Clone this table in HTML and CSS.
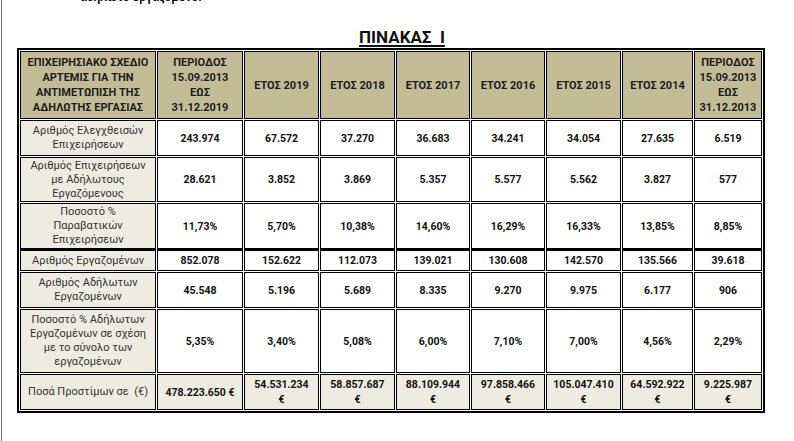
FILE: index.html
```html
<!DOCTYPE html>
<html lang="el">
<head>
<meta charset="utf-8">
<title>ΠΙΝΑΚΑΣ Ι</title>
<link rel="stylesheet" href="styles.css">
</head>
<body>
<div class="page">
  <p class="lead"><span>αδήλωτο εργαζόμενο.</span></p>
  <h1 class="title">ΠΙΝΑΚΑΣ&nbsp; Ι</h1>
  <div class="grid">
    <div class="cell head">ΕΠΙΧΕΙΡΗΣΙΑΚΟ ΣΧΕΔΙΟ<br>ΑΡΤΕΜΙΣ ΓΙΑ ΤΗΝ<br>ΑΝΤΙΜΕΤΩΠΙΣΗ ΤΗΣ<br>ΑΔΗΛΩΤΗΣ ΕΡΓΑΣΙΑΣ</div>
    <div class="cell head">ΠΕΡΙΟΔΟΣ<br>15.09.2013<br>ΕΩΣ<br>31.12.2019</div>
    <div class="cell head">ΕΤΟΣ 2019</div>
    <div class="cell head">ΕΤΟΣ 2018</div>
    <div class="cell head">ΕΤΟΣ 2017</div>
    <div class="cell head">ΕΤΟΣ 2016</div>
    <div class="cell head">ΕΤΟΣ 2015</div>
    <div class="cell head">ΕΤΟΣ 2014</div>
    <div class="cell head">ΠΕΡΙΟΔΟΣ<br>15.09.2013<br>ΕΩΣ<br>31.12.2013</div>

    <div class="cell label">Αριθμός Ελεγχθεισών<br>Επιχειρήσεων</div>
    <div class="cell val">243.974</div>
    <div class="cell val">67.572</div>
    <div class="cell val">37.270</div>
    <div class="cell val">36.683</div>
    <div class="cell val">34.241</div>
    <div class="cell val">34.054</div>
    <div class="cell val">27.635</div>
    <div class="cell val">6.519</div>

    <div class="cell label">Αριθμός Επιχειρήσεων<br>με Αδήλωτους<br>Εργαζόμενους</div>
    <div class="cell val">28.621</div>
    <div class="cell val">3.852</div>
    <div class="cell val">3.869</div>
    <div class="cell val">5.357</div>
    <div class="cell val">5.577</div>
    <div class="cell val">5.562</div>
    <div class="cell val">3.827</div>
    <div class="cell val">577</div>

    <div class="cell label">Ποσοστό %<br>Παραβατικών<br>Επιχειρήσεων</div>
    <div class="cell val">11,73%</div>
    <div class="cell val">5,70%</div>
    <div class="cell val">10,38%</div>
    <div class="cell val">14,60%</div>
    <div class="cell val">16,29%</div>
    <div class="cell val">16,33%</div>
    <div class="cell val">13,85%</div>
    <div class="cell val">8,85%</div>

    <div class="cell label thick">Αριθμός Εργαζομένων</div>
    <div class="cell val thick">852.078</div>
    <div class="cell val thick">152.622</div>
    <div class="cell val thick">112.073</div>
    <div class="cell val thick">139.021</div>
    <div class="cell val thick">130.608</div>
    <div class="cell val thick">142.570</div>
    <div class="cell val thick">135.566</div>
    <div class="cell val thick">39.618</div>

    <div class="cell label">Αριθμός Αδήλωτων<br>Εργαζομένων</div>
    <div class="cell val">45.548</div>
    <div class="cell val">5.196</div>
    <div class="cell val">5.689</div>
    <div class="cell val">8.335</div>
    <div class="cell val">9.270</div>
    <div class="cell val">9.975</div>
    <div class="cell val">6.177</div>
    <div class="cell val">906</div>

    <div class="cell label">Ποσοστό % Αδήλωτων<br>Εργαζομένων σε σχέση<br>με το σύνολο των<br>εργαζομένων</div>
    <div class="cell val">5,35%</div>
    <div class="cell val">3,40%</div>
    <div class="cell val">5,08%</div>
    <div class="cell val">6,00%</div>
    <div class="cell val">7,10%</div>
    <div class="cell val">7,00%</div>
    <div class="cell val">4,56%</div>
    <div class="cell val">2,29%</div>

    <div class="cell label total">Ποσά Προστίμων σε &nbsp;(€)</div>
    <div class="cell val total nowrap">478.223.650 €</div>
    <div class="cell val total">54.531.234<br>€</div>
    <div class="cell val total">58.857.687<br>€</div>
    <div class="cell val total">88.109.944<br>€</div>
    <div class="cell val total">97.858.466<br>€</div>
    <div class="cell val total">105.047.410<br>€</div>
    <div class="cell val total">64.592.922<br>€</div>
    <div class="cell val total">9.225.987<br>€</div>
  </div>
</div>
</body>
</html>
```
FILE: styles.css
```css
html, body {
  margin: 0;
  padding: 0;
  background: #ffffff;
}

body {
  font-family: Roboto, "Noto Sans", "DejaVu Sans", sans-serif;
  color: #111;
}

.page {
  margin-left: 1px;
  border-left: 1px solid #6e6e6e;
  height: 441px;
  box-sizing: border-box;
  overflow: hidden;
}

.lead {
  margin: 0;
  height: 5px;
  overflow: hidden;
  display: flex;
  align-items: flex-end;
  padding-left: 78px;
}

.lead span {
  font-size: 12px;
  font-weight: 700;
  line-height: 16px;
  color: #111;
  white-space: nowrap;
}

.title {
  margin: 22px 0 1px 0;
  padding-left: 8px;
  text-align: center;
  font-size: 17px;
  line-height: 20px;
  font-weight: 700;
  text-decoration: underline;
  text-decoration-thickness: 2px;
  text-underline-offset: 2px;
  color: #111;
}

.grid {
  margin-left: 15px;
  width: 748px;
  box-sizing: border-box;
  border: 2px solid #000;
  padding: 1px;
  display: grid;
  grid-template-columns: 136px 86px 75px 75px 74px 74px 75px 71px 68px;
  grid-template-rows: 68px 36px 45px 46px 21px 36px 64px 36px;
  gap: 1px;
  background: #fff;
}

.cell {
  border: 1px solid #000;
  box-sizing: border-box;
  display: flex;
  align-items: center;
  justify-content: center;
  text-align: center;
  background: #fff;
}

.head {
  background: #c4bc96;
  font-size: 11px;
  font-weight: 700;
  line-height: 15px;
  color: #1c1c1c;
}

.label {
  background: #eeece1;
  font-size: 11px;
  font-weight: 400;
  line-height: 14px;
  color: #333;
}

.val {
  font-size: 10.5px;
  font-weight: 700;
  line-height: 15px;
  color: #111;
}

.total {
  background: #eeece1;
}

.nowrap {
  white-space: nowrap;
}

.thick {
  box-shadow: 0 -1px 0 #000;
}
```
